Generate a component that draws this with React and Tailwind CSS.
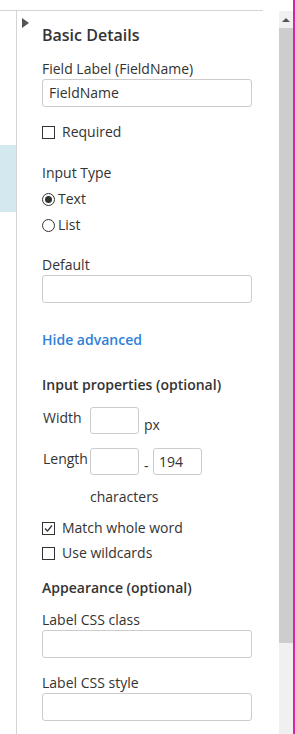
import React from "react";

function Field({ label, className = "", value = "" }) {
  return (
    <div className={"flex flex-col " + className}>
      <div className="h-5 leading-5">{label}</div>
      <div className="h-[28px] w-[210px] rounded-[3px] border border-[#cccccc] bg-white px-[6px] leading-[26px]">
        {value}
      </div>
    </div>
  );
}

function Checkbox({ checked, label, className = "" }) {
  return (
    <div className={"flex h-5 items-center " + className}>
      <span className="flex h-[13px] w-[13px] items-center justify-center border border-[#333333] bg-white">
        {checked && (
          <svg width="11" height="11" viewBox="0 0 11 11">
            <path d="M2 5.5 L4.5 8 L9 2.5" fill="none" stroke="#333333" strokeWidth="1.2" />
          </svg>
        )}
      </span>
      <span className="ml-[7px] leading-5">{label}</span>
    </div>
  );
}

function Radio({ checked, label, className = "" }) {
  return (
    <div className={"flex h-5 items-center " + className}>
      <span className="flex h-[13px] w-[13px] items-center justify-center rounded-full border border-[#333333] bg-white">
        {checked && <span className="h-[7px] w-[7px] rounded-full bg-[#333333]" />}
      </span>
      <span className="ml-[3px] leading-5">{label}</span>
    </div>
  );
}

export default function App() {
  return (
    <div
      className="flex h-[734px] w-[295px] overflow-hidden bg-white text-[14px] text-[#333333]"
      style={{ fontFamily: '"Open Sans", "Liberation Sans", sans-serif' }}
    >
      <div className="w-[279px] pt-[10px]">
        <div className="flex h-full w-[263px] border-t border-[#d4d4d4]">
          {/* left strip */}
          <div className="w-[17px] border-r border-[#d4d4d4]">
            <div className="mt-[134px] h-[67px] w-4 bg-[#d3e9ef]" />
          </div>

          {/* panel */}
          <div className="flex">
            <div className="ml-[5px] mt-[7px] h-0 w-0 border-y-[5px] border-l-[7px] border-y-transparent border-l-[#555555]" />
            <div className="ml-[13px] flex flex-col">
              <h2 className="mt-[13px] h-[22px] text-[16px] font-semibold leading-[22px]">Basic Details</h2>
              <Field label="Field Label (FieldName)" className="mt-[13px]" value="FieldName" />
              <Checkbox label="Required" className="mt-[15px]" />

              <div className="mt-[21px] h-5 leading-5">Input Type</div>
              <Radio checked label="Text" className="mt-[6px]" />
              <Radio label="List" className="mt-[6px]" />

              <Field label="Default" className="mt-[20px]" />

              <a className="mt-[27px] h-5 font-semibold leading-5 text-[#2f7fd8]">Hide advanced</a>

              <h3 className="mt-[25px] h-5 font-semibold leading-5">Input properties (optional)</h3>

              <div className="mt-[12px] flex items-start">
                <span className="mt-[1px] w-[48px] pl-px leading-5">Width</span>
                <span className="h-[27px] w-[49px] rounded-[3px] border border-[#cccccc]" />
                <span className="ml-[5px] mt-[8px] leading-5">px</span>
              </div>
              <div className="mt-[13px] flex items-start">
                <span className="mt-[1px] w-[48px] pl-px leading-5">Length</span>
                <span className="h-[27px] w-[49px] rounded-[3px] border border-[#cccccc]" />
                <span className="ml-[5px] mt-[8px] w-[9px] leading-5">-</span>
                <span className="h-[27px] w-[49px] rounded-[3px] border border-[#cccccc] px-[5px] leading-[25px]">194</span>
              </div>
              <div className="ml-[48px] mt-[11px] h-5 leading-5">characters</div>

              <Checkbox checked label="Match whole word" className="mt-[11px]" />
              <Checkbox label="Use wildcards" className="mt-[5px]" />

              <h3 className="mt-[15px] h-5 font-semibold leading-5">Appearance (optional)</h3>
              <Field label="Label CSS class" className="mt-[12px]" />
              <Field label="Label CSS style" className="mt-[15px]" />
            </div>
          </div>
        </div>
      </div>

      {/* scrollbar */}
      <div className="mt-[11px] flex w-[14px] flex-col bg-[#f0f0f0]">
        <div className="flex h-[17px] items-center justify-center">
          <svg width="8" height="6" viewBox="0 0 8 6">
            <path d="M0 5 L4 1 L8 5 Z" fill="#555555" />
          </svg>
        </div>
        <div className="h-[615px] bg-[#cdcdcd]" />
      </div>
      <div className="w-[2px] bg-[#e0209c]" />
    </div>
  );
}
